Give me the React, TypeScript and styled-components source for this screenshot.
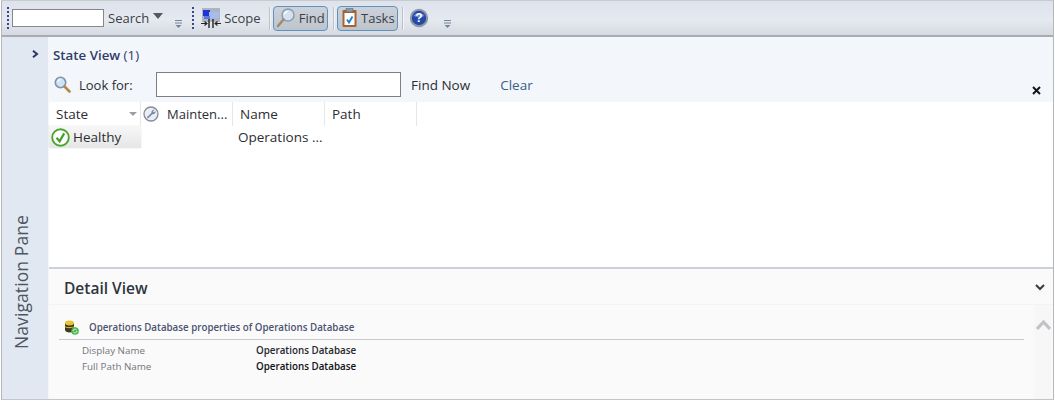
import React from "react";
import styled, { createGlobalStyle } from "styled-components";

const GlobalStyle = createGlobalStyle`
  html, body {
    margin: 0;
    padding: 0;
    background: #fff;
  }
  body {
    font-family: "Open Sans", "Noto Sans", sans-serif;
  }
`;

const SearchGlyph = () => (
  <svg width="19" height="19" viewBox="0 0 19 19">
    <circle cx="7.5" cy="7.5" r="5.2" fill="#cfe3f7" stroke="#7f93a8" strokeWidth="1.6" />
    <path d="M4.8 7a3 3 0 0 1 2.6-2.6" stroke="#fff" strokeWidth="1.2" fill="none" />
    <path d="M11.5 11.5l5 5" stroke="#b5874a" strokeWidth="2.6" strokeLinecap="round" />
  </svg>
);

const ScopeGlyph = () => (
  <svg width="20" height="20" viewBox="0 0 20 20">
    <rect x="1" y="0" width="18" height="14" fill="#aeb5c0" />
    <rect x="2" y="2" width="7" height="6" fill="#1f35d8" />
    <rect x="8" y="4" width="10" height="6" fill="#a6bbf0" />
    <rect x="3" y="8" width="6" height="3" fill="#5d7ae0" />
    <path d="M8 11v9M12 11v9" stroke="#222" strokeWidth="1.4" />
    <path d="M0 15.500h6M14 15.500h6M3.500 13.500L6 15.500l-2.500 2M16.500 13.500L14 15.500l2.500 2" stroke="#222" strokeWidth="1.100" fill="none" />
  </svg>
);

const FindGlyph = () => (
  <svg width="20" height="22" viewBox="0 0 20 22">
    <circle cx="12" cy="8" r="6" fill="#d3e2ee" stroke="#8b9eae" strokeWidth="1.5" />
    <path d="M8.5 7.5a3.6 3.6 0 0 1 3-3" stroke="#fff" strokeWidth="1.3" fill="none" />
    <path d="M7.5 12.5L2 19" stroke="#9d8a6e" strokeWidth="2.4" strokeLinecap="round" />
  </svg>
);

const TasksGlyph = () => (
  <svg width="18" height="20" viewBox="0 0 18 20">
    <rect x="1.500" y="2" width="14" height="17" rx="1" fill="#a8642f" />
    <rect x="3.500" y="5" width="10" height="12" fill="#fff" />
    <rect x="5" y="0" width="7" height="4" rx="1" fill="#8e9aa5" stroke="#5e6a75" strokeWidth="0.7" />
    <path d="M6 11.500l2 3 3.500-6" stroke="#1c7ed0" strokeWidth="1.800" fill="none" />
  </svg>
);

const HelpGlyph = () => (
  <svg width="20" height="20" viewBox="0 0 20 20">
    <circle cx="10" cy="10" r="9.2" fill="#8e98a6" />
    <circle cx="10" cy="10" r="7.2" fill="#2449a8" />
    <path d="M4.5 8a6 5 0 0 1 11 0a8 4 0 0 1-11 0z" fill="#6d8bd6" />
    <text x="10" y="14.4" textAnchor="middle" fontSize="12" fontWeight="700" fontFamily="Liberation Sans, sans-serif" fill="#fff">?</text>
  </svg>
);

const WrenchGlyph = () => (
  <svg width="16" height="16" viewBox="0 0 16 16">
    <circle cx="8" cy="8" r="7" fill="#eceef3" stroke="#868b95" strokeWidth="1.300" />
    <path d="M3.800 11.200L8.400 7a2.900 2.900 0 0 1 3.400-3.400L10 5.300l.8 1.200 1.900-1.500A2.900 2.900 0 0 1 9.400 8.200L5 12.500z" fill="#7488ae" />
  </svg>
);

const HealthyGlyph = () => (
  <svg width="19" height="19" viewBox="0 0 19 19">
    <circle cx="9.5" cy="9.5" r="8.3" fill="#fff" stroke="#4aa52e" strokeWidth="1.9" />
    <path d="M5.6 9.8l3 3.6 4.6-8" stroke="#43a028" strokeWidth="2.2" fill="none" />
  </svg>
);

const DatabaseGlyph = () => (
  <svg width="15" height="15" viewBox="0 0 15 15">
    <path d="M1 3v7c0 1.5 2 2.4 4.5 2.4S10 11.500 10 10V3z" fill="#3c3a22" />
    <ellipse cx="5.500" cy="3" rx="4.500" ry="2.400" fill="#e7c534" />
    <path d="M1 6.500c1 1.500 8 1.500 9 0" stroke="#d3b42c" strokeWidth="1.100" fill="none" />
    <circle cx="11" cy="11" r="3.800" fill="#45b548" />
    <path d="M9 11a2 2 0 0 1 3.600-1M13 11a2 2 0 0 1-3.600 1" stroke="#fff" strokeWidth="0.900" fill="none" />
  </svg>
);

const OverflowMark = () => (
  <svg width="7" height="8" viewBox="0 0 7 8">
    <path d="M0 .5h7M0 3h7" stroke="#76849a" strokeWidth="1" />
    <path d="M.5 5h6L3.500 8z" fill="#76849a" />
  </svg>
);

const Frame = styled.div`
  position: relative;
  width: 1053px;
  height: 400px;
  margin-left: 1px;
  box-sizing: border-box;
  display: flex;
  flex-direction: column;
  border: 1px solid #b4b7bb;
  border-top-color: #c9cbce;
  border-bottom-color: #c3c5c8;
  color: #25282c;
  overflow: hidden;
`;

const Toolbar = styled.div`
  height: 36px;
  flex: none;
  box-sizing: border-box;
  display: flex;
  align-items: center;
  padding: 0 0 0 5px;
  background: linear-gradient(#dde3ec, #e5e9f0 55%, #d5dae2);
  border-bottom: 2px solid #a8abaf;
`;

const Grip = styled.span`
  width: 2px;
  height: 22px;
  flex: none;
  background: repeating-linear-gradient(#39468c 0 2px, transparent 2px 4px);
`;

const SearchBox = styled.div`
  width: 92px;
  height: 18px;
  box-sizing: border-box;
  margin-left: 3px;
  background: #fff;
  border: 1px solid #85878a;
`;

const ToolLabel = styled.span`
  font-size: 13px;
  color: #3b3f46;
  line-height: 18px;
  white-space: nowrap;
`;

const SearchLabel = styled(ToolLabel)`
  margin-left: 4px;
`;

const Caret = styled.span`
  width: 0;
  height: 0;
  margin: 0 0 5px 4px;
  border-left: 5px solid transparent;
  border-right: 5px solid transparent;
  border-top: 6px solid #55585f;
`;

const Overflow = styled.span<{ $left: number; $right: number }>`
  display: flex;
  align-self: flex-end;
  margin: 0 ${(p) => p.$right}px 7px ${(p) => p.$left}px;
`;

const ScopeTool = styled.div`
  display: flex;
  align-items: center;
  gap: 3px;
  margin-left: 7px;
`;

const Divider = styled.span<{ $left: number }>`
  width: 1px;
  height: 23px;
  margin-left: ${(p) => p.$left}px;
  background: #bcc2ca;
  box-shadow: 1px 0 0 #f1f3f6;
`;

const ToggleTool = styled.div<{ $width: number; $inset: number }>`
  width: ${(p) => p.$width}px;
  height: 25px;
  margin-left: 3px;
  box-sizing: border-box;
  display: flex;
  align-items: center;
  justify-content: space-between;
  padding: 0 2px 0 ${(p) => p.$inset}px;
  background: linear-gradient(#cdd2da, #bec4cc);
  border: 1px solid #5f93bd;
  border-radius: 4px;
`;

const HelpSlot = styled.span`
  display: flex;
  margin-left: 6px;
`;

const Body = styled.div`
  flex: 1;
  min-height: 0;
  display: flex;
`;

const NavRail = styled.aside`
  width: 47px;
  flex: none;
  display: flex;
  flex-direction: column;
  align-items: center;
  justify-content: space-between;
  box-sizing: border-box;
  padding: 13px 0 50px;
  background: #e1e8f2;
  border-right: 1px solid #f3f5f9;
`;

const RailToggle = styled.span`
  display: flex;
  align-self: flex-end;
  margin-right: 9px;
`;

const RailLabel = styled.span`
  writing-mode: vertical-rl;
  transform: rotate(180deg);
  font-size: 17.500px;
  letter-spacing: 0.1px;
  color: #4c5560;
  margin-left: -9px;
`;

const Workspace = styled.main`
  flex: 1;
  min-width: 0;
  display: flex;
  flex-direction: column;
`;

const StatePane = styled.section`
  height: 232px;
  flex: none;
  box-sizing: border-box;
  display: flex;
  flex-direction: column;
  border-bottom: 2px solid #ccd0d7;
`;

const StateHeader = styled.div`
  height: 65px;
  flex: none;
  background: #f3f6fb;
  display: flex;
  flex-direction: column;
  box-sizing: border-box;
  padding: 9px 0 0 4px;
`;

const PaneTitle = styled.div`
  font-size: 13.300px;
  font-weight: 600;
  line-height: 18px;
  color: #2f3d68;
  span {
    font-weight: 400;
  }
`;

const SearchRow = styled.div`
  display: flex;
  align-items: center;
  margin-top: 8px;
  height: 25px;
`;

const LookLabel = styled.span`
  font-size: 13px;
  margin-left: 7px;
  width: 77px;
  flex: none;
  color: #2b2e33;
`;

const LookInput = styled.div`
  width: 245px;
  height: 25px;
  box-sizing: border-box;
  flex: none;
  background: #fff;
  border: 1px solid #7d7f83;
`;

const FindNow = styled.span`
  font-size: 13.500px;
  margin-left: 10px;
  color: #2b2e33;
`;

const ClearLink = styled.span`
  font-size: 13.500px;
  margin-left: 30px;
  color: #3a5f86;
`;

const CloseMark = styled.span`
  position: absolute;
  right: 12px;
  top: 85px;
  display: flex;
`;

const GridHead = styled.div`
  display: flex;
  height: 24px;
  flex: none;
  background: #fff;
`;

const HeadCell = styled.div<{ $width: number }>`
  width: ${(p) => p.$width}px;
  flex: none;
  box-sizing: border-box;
  display: flex;
  align-items: center;
  font-size: 13.500px;
  padding-left: 7px;
  color: #2b2e33;
  border-right: 1px solid #e4e7ec;
  position: relative;
`;

const MaintCell = styled(HeadCell)`
  padding-left: 2px;
  gap: 8px;
  font-size: 13px;
`;

const SortCaret = styled.span`
  position: absolute;
  right: 3px;
  top: 10px;
  width: 0;
  height: 0;
  border-left: 4px solid transparent;
  border-right: 4px solid transparent;
  border-top: 4px solid #9a9ea5;
`;

const GridRow = styled.div`
  display: flex;
  flex: 1;
  background: #fff;
`;

const HealthChip = styled.div`
  width: 92px;
  height: 22px;
  flex: none;
  box-sizing: border-box;
  display: flex;
  align-items: center;
  gap: 3px;
  font-size: 13.500px;
  padding-left: 2px;
  color: #2b2e33;
  background: linear-gradient(#f7f7f7, #e6e6e6);
  border-radius: 2px;
  box-shadow: 0 0 1px #a9a9a9;
`;

const RowText = styled.span`
  font-size: 13.500px;
  line-height: 22px;
  margin-left: 97px;
  color: #2b2e33;
`;

const DetailPane = styled.section`
  flex: 1;
  min-height: 0;
  background: #fafafb;
  display: flex;
  flex-direction: column;
`;

const DetailHeader = styled.div`
  height: 36px;
  flex: none;
  box-sizing: border-box;
  display: flex;
  align-items: center;
  justify-content: space-between;
  padding: 2px 8px 0 15px;
  border-bottom: 1px solid #f3f3f5;
`;

const DetailTitle = styled.h2`
  margin: 0;
  font-size: 15.500px;
  font-weight: 600;
  color: #30343c;
`;

const DetailBody = styled.div`
  flex: 1;
  display: flex;
  min-height: 0;
`;

const Properties = styled.div`
  flex: 1;
  min-width: 0;
  padding: 12px 10px 0 10px;
`;

const PropsHeading = styled.div`
  display: flex;
  align-items: center;
  gap: 10px;
  height: 23px;
  box-sizing: border-box;
  margin-bottom: 3px;
  padding: 0 0 2px 5px;
  font-size: 9.750px;
  font-weight: 600;
  color: #4d5370;
  border-bottom: 1px solid #c9c9cb;
`;

const PropRow = styled.div`
  display: flex;
  height: 15.500px;
  line-height: 15.500px;
  font-size: 9.800px;
  padding-left: 23px;
`;

const PropName = styled.span`
  width: 174px;
  flex: none;
  color: #72757b;
`;

const PropValue = styled.span<{ $dark?: boolean }>`
  font-weight: 600;
  color: ${(p) => (p.$dark ? "#101114" : "#26282c")};
`;

const ScrollRail = styled.div`
  width: 18px;
  flex: none;
  margin-right: 1px;
  padding-top: 14px;
  box-sizing: border-box;
  background: #f7f7f8;
  display: flex;
  justify-content: center;
`;

const App = () => {
  return (
    <>
      <GlobalStyle />
      <Frame>
        <Toolbar>
          <Grip />
          <SearchBox />
          <SearchLabel>Search</SearchLabel>
          <Caret />
          <Overflow $left={12} $right={10}>
            <OverflowMark />
          </Overflow>
          <Grip />
          <ScopeTool>
            <ScopeGlyph />
            <ToolLabel>Scope</ToolLabel>
          </ScopeTool>
          <Divider $left={8} />
          <ToggleTool $width={55} $inset={2}>
            <FindGlyph />
            <ToolLabel>Find</ToolLabel>
          </ToggleTool>
          <Divider $left={5} />
          <ToggleTool $width={61} $inset={3}>
            <TasksGlyph />
            <ToolLabel>Tasks</ToolLabel>
          </ToggleTool>
          <Divider $left={4} />
          <HelpSlot>
            <HelpGlyph />
          </HelpSlot>
          <Overflow $left={15} $right={0}>
            <OverflowMark />
          </Overflow>
        </Toolbar>
        <Body>
          <NavRail>
            <RailToggle>
              <svg width="7" height="8" viewBox="0 0 7 8">
                <path d="M1 .8L5 4 1 7.200" stroke="#2a3566" strokeWidth="2" fill="none" />
              </svg>
            </RailToggle>
            <RailLabel>Navigation Pane</RailLabel>
          </NavRail>
          <Workspace>
            <StatePane>
              <StateHeader>
                <PaneTitle>
                  State View <span>(1)</span>
                </PaneTitle>
                <SearchRow>
                  <SearchGlyph />
                  <LookLabel>Look for:</LookLabel>
                  <LookInput />
                  <FindNow>Find Now</FindNow>
                  <ClearLink>Clear</ClearLink>
                </SearchRow>
              </StateHeader>
              <GridHead>
                <HeadCell $width={92}>
                  State
                  <SortCaret />
                </HeadCell>
                <MaintCell $width={92}>
                  <WrenchGlyph />
                  Mainten...
                </MaintCell>
                <HeadCell $width={92}>Name</HeadCell>
                <HeadCell $width={92}>Path</HeadCell>
              </GridHead>
              <GridRow>
                <HealthChip>
                  <HealthyGlyph />
                  Healthy
                </HealthChip>
                <RowText>Operations ...</RowText>
              </GridRow>
            </StatePane>
            <DetailPane>
              <DetailHeader>
                <DetailTitle>Detail View</DetailTitle>
                <svg width="10" height="7" viewBox="0 0 10 7">
                  <path d="M1 1l4 4 4-4" stroke="#343a48" strokeWidth="2" fill="none" />
                </svg>
              </DetailHeader>
              <DetailBody>
                <Properties>
                  <PropsHeading>
                    <DatabaseGlyph />
                    Operations Database properties of Operations Database
                  </PropsHeading>
                  <PropRow>
                    <PropName>Display Name</PropName>
                    <PropValue>Operations Database</PropValue>
                  </PropRow>
                  <PropRow>
                    <PropName>Full Path Name</PropName>
                    <PropValue $dark>Operations Database</PropValue>
                  </PropRow>
                </Properties>
                <ScrollRail>
                  <svg width="15" height="12" viewBox="0 0 15 12">
                    <path d="M1 10l6.500-7 6.500 7" stroke="#c0c2c5" strokeWidth="3.200" fill="none" />
                  </svg>
                </ScrollRail>
              </DetailBody>
            </DetailPane>
          </Workspace>
        </Body>
        <CloseMark>
          <svg width="9" height="9" viewBox="0 0 9 9">
            <path d="M1 1l7 7M8 1l-7 7" stroke="#14161c" strokeWidth="2" />
          </svg>
        </CloseMark>
      </Frame>
    </>
  );
};

export default App;
